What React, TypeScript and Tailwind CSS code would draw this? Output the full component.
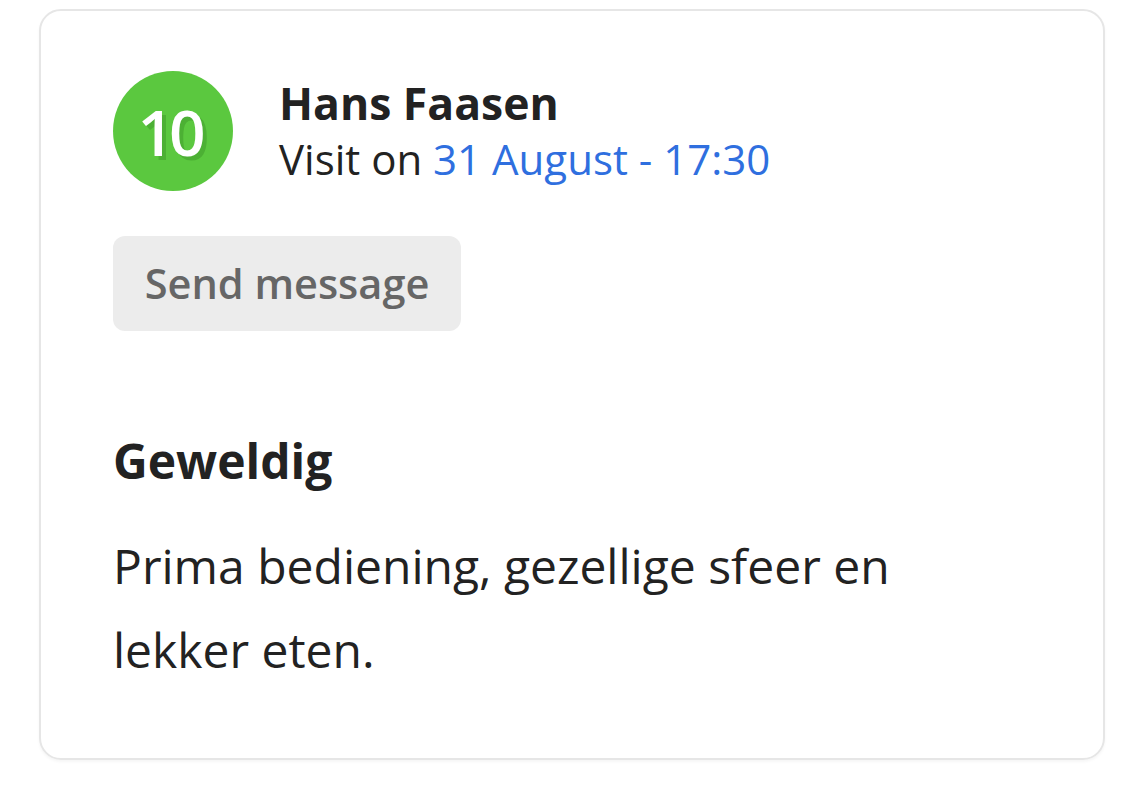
import React from 'react';

const review = {
  score: 10,
  name: 'Hans Faasen',
  visit: '31 August - 17:30',
  title: 'Geweldig',
  body: 'Prima bediening, gezellige sfeer en lekker eten.',
};

const App: React.FC = () => {
  return (
    <div className="min-h-screen bg-white pt-[9px] pl-[39px] font-['Open_Sans',sans-serif] text-[#222]">
      {/* Review card */}
      <div className="w-[1066px] h-[751px] rounded-[22px] border-2 border-[#e6e6e6] pl-[72px] pt-[60px] shadow-[0_2px_3px_rgba(0,0,0,0.04)]">
        <div className="flex items-center gap-[46px]">
          <div className="w-[120px] h-[120px] rounded-full bg-[#5bc83f] flex items-center justify-center">
            <span className="text-[64px] font-semibold leading-none tracking-[-5px] pr-[8px] text-white [text-shadow:4px_4px_0_#4cb034] mt-[2px]">
              {review.score}
            </span>
          </div>
          <div className="flex flex-col">
            <span className="text-[44.5px] font-bold leading-[56px]">{review.name}</span>
            <span className="text-[42px] leading-[56px]">
              Visit on <span className="text-[#2f6fdf]">{review.visit}</span>
            </span>
          </div>
        </div>

        <button className="mt-[45px] h-[95px] w-[348px] rounded-[12px] bg-[#ececec] text-[41.5px] font-semibold text-[#666]">
          Send message
        </button>

        <div className="mt-[102px] w-[800px]">
          <div className="text-[48px] font-bold leading-[56px]">{review.title}</div>
          <p className="mt-[35px] text-[48px] leading-[84px]">{review.body}</p>
        </div>
      </div>
    </div>
  );
};

export default App;
